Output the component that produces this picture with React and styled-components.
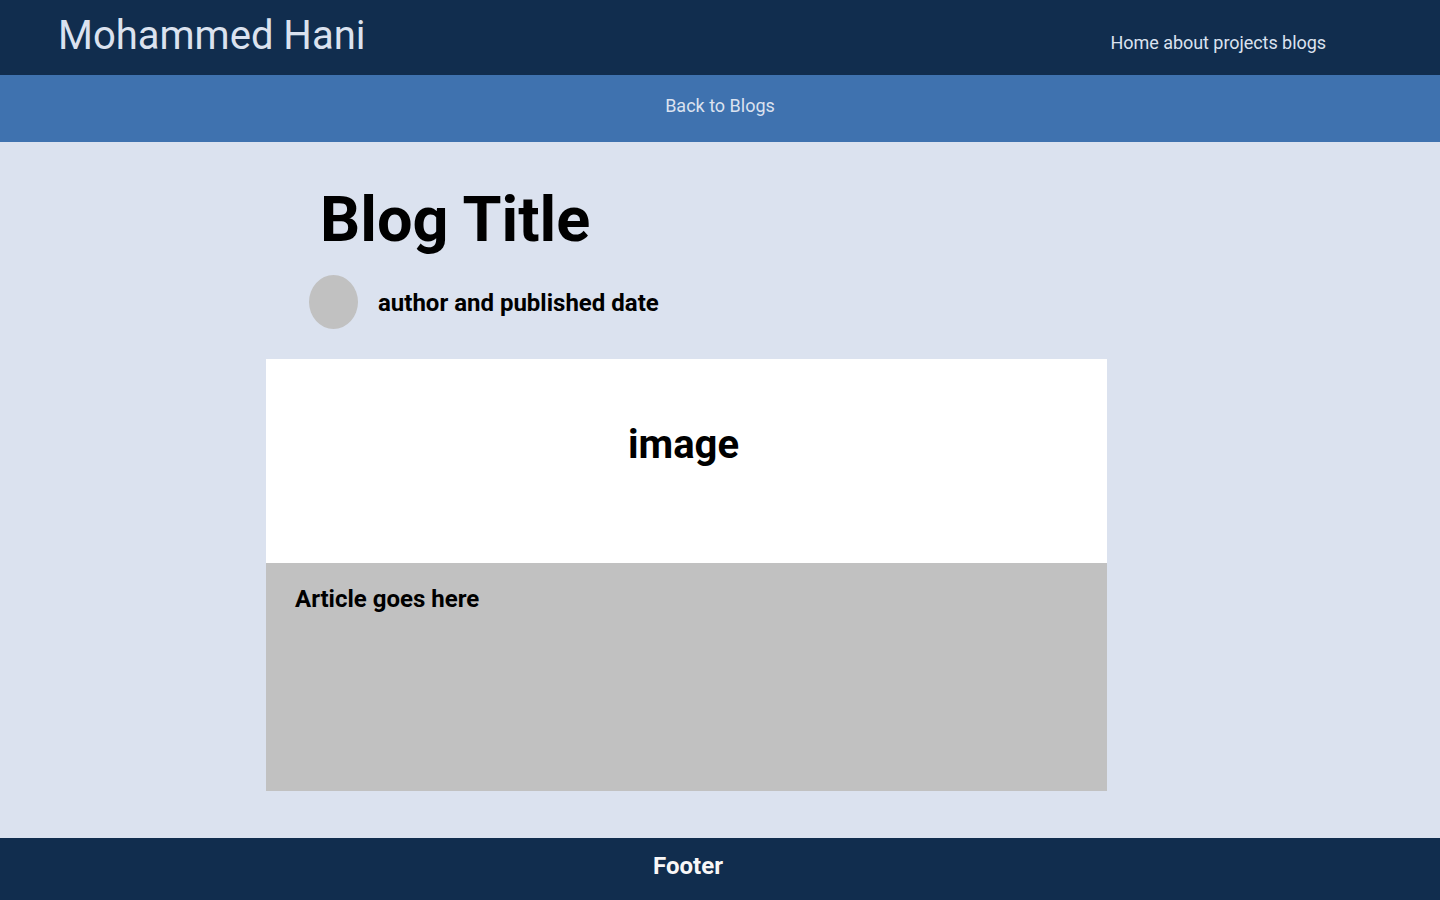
import styled, { createGlobalStyle } from "styled-components";

const GlobalStyle = createGlobalStyle`
  html, body {
    margin: 0;
    padding: 0;
    background: #dbe2ef;
    font-family: Roboto, "Liberation Sans", sans-serif;
  }
`;

const Page = styled.div`
  min-height: 900px;
  display: flex;
  flex-direction: column;
`;

const Header = styled.header`
  height: 75px;
  background: #112d4e;
  display: flex;
  align-items: center;
  justify-content: space-between;
  padding: 0 114px 0 58px;
`;

const Name = styled.h1`
  margin: 0 0 5px;
  font-size: 40px;
  font-weight: 400;
  color: #dbe2ef;
`;

const Nav = styled.nav`
  margin-top: 9px;
  font-size: 18px;
  letter-spacing: -0.05px;
  color: #dbe2ef;
`;

const BackBar = styled.div`
  height: 67px;
  background: #3f72af;
  display: flex;
  align-items: center;
  justify-content: center;
  padding-bottom: 6px;
  box-sizing: border-box;
  font-size: 18px;
  color: #dbe2ef;
`;

const Main = styled.main`
  flex: 1;
  padding: 0 333px 47px 266px;
  display: flex;
  flex-direction: column;
`;

const Title = styled.h2`
  margin: 42px 0 0 54px;
  font-size: 63px;
  font-weight: 700;
  line-height: 72px;
  color: #000;
`;

const AuthorRow = styled.div`
  display: flex;
  align-items: center;
  gap: 20px;
  margin: 19px 0 30px 43px;
`;

const Avatar = styled.div`
  width: 49px;
  height: 54px;
  border-radius: 50%;
  background: #c1c1c1;
`;

const Meta = styled.span`
  padding-top: 2px;
  font-size: 24px;
  font-weight: 700;
  color: #000;
`;

const ImageBox = styled.div`
  height: 204px;
  background: #fff;
  display: flex;
  justify-content: center;
  padding: 62px 6px 0 0;
  box-sizing: border-box;
  font-size: 40px;
  font-weight: 700;
  color: #000;
`;

const Article = styled.div`
  height: 228px;
  background: #c1c1c1;
  padding: 22px 29px;
  box-sizing: border-box;
  font-size: 24px;
  font-weight: 700;
  color: #000;
`;

const Footer = styled.footer`
  height: 62px;
  background: #112d4e;
  display: flex;
  align-items: center;
  justify-content: center;
  padding: 0 64px 6px 0;
  box-sizing: border-box;
  font-size: 24px;
  font-weight: 700;
  color: #f9f7f7;
`;

export default function App() {
  return (
    <Page>
      <GlobalStyle />
      <Header>
        <Name>Mohammed Hani</Name>
        <Nav>Home about projects blogs</Nav>
      </Header>
      <BackBar>Back to Blogs</BackBar>
      <Main>
        <Title>Blog Title</Title>
        <AuthorRow>
          <Avatar />
          <Meta>author and published date</Meta>
        </AuthorRow>
        <ImageBox>image</ImageBox>
        <Article>Article goes here</Article>
      </Main>
      <Footer>Footer</Footer>
    </Page>
  );
}
